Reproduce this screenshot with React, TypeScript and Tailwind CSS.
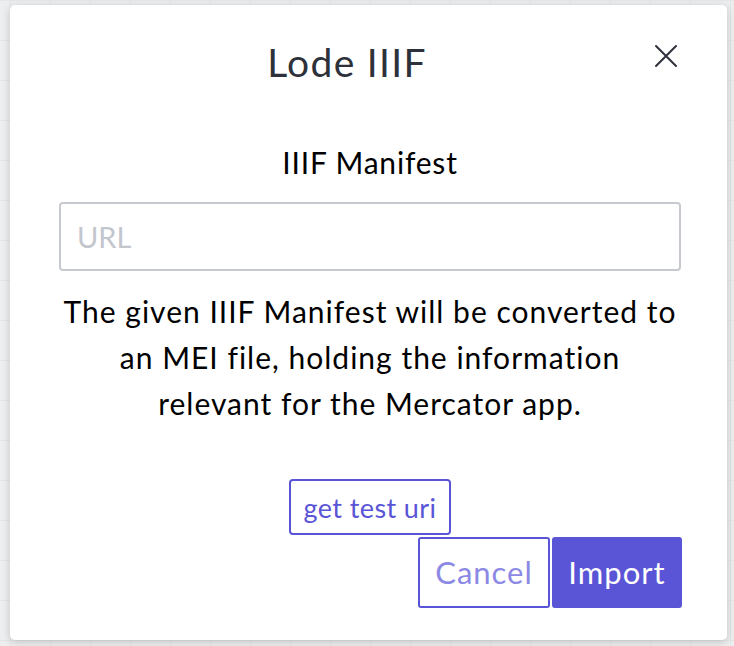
import React from 'react';

const App: React.FC = () => {
  return (
    <div
      className="min-h-screen w-full bg-[#eceeef] bg-[linear-gradient(to_right,#e4e6e8_1px,transparent_1px),linear-gradient(to_bottom,#e4e6e8_1px,transparent_1px)] bg-[size:40px_40px] bg-[position:10px_0] pt-[5px] pl-[10px] pr-[7px]"
      style={{ fontFamily: 'Lato, "Open Sans", sans-serif' }}
    >
      {/* Modal */}
      <div className="w-[717px] h-[635px] bg-white rounded-[5px] shadow-[0_2px_8px_rgba(0,0,0,0.18)] pl-[49px] pr-[46px] pt-[30px]">
        {/* Header */}
        <div className="flex items-center h-[50px]">
          <h1 className="flex-1 text-center text-[39px] leading-none tracking-[1.3px] text-[#2e3139] font-normal mt-[4px]">Lode IIIF</h1>
          <button className="w-[48px] h-[40px] flex items-center justify-end pr-[5px] text-[#2e3139] -mr-[2px] -mt-[8px]">
            <svg width="24" height="24" viewBox="0 0 24 24" fill="none" stroke="currentColor" strokeWidth="2" strokeLinecap="round">
              <path d="M2 2L22 22M22 2L2 22" />
            </svg>
          </button>
        </div>

        {/* Body */}
        <div className="flex flex-col items-center">
          <label className="mt-[62px] text-[30px] leading-none tracking-[0.8px] text-black">IIIF Manifest</label>
          <input
            placeholder="URL"
            className="mt-[25px] w-full h-[69px] border-2 border-[#c6c9d0] rounded-[4px] px-[16px] text-[29px] text-black placeholder:text-[#c3c6cd] outline-none"
          />
          <p className="mt-[17px] text-center text-[30px] leading-[46px] tracking-[1px] text-black">
            The given IIIF Manifest will be converted to
            <br />
            an MEI file, holding the information
            <br />
            relevant for the Mercator app.
          </p>
          <button className="mt-[53px] h-[56px] px-[13px] border-2 border-[#5a55d6] rounded-[4px] text-[#5a55d6] text-[27px] leading-none tracking-[0.4px]">
            get test uri
          </button>
        </div>

        {/* Actions */}
        <div className="flex justify-end gap-[2px] mt-[2px] -mr-[1px]">
          <button className="h-[71px] w-[132px] border-2 border-[#5a55d6] rounded-[3px] bg-white text-[#8c89e4] text-[31px] leading-none tracking-[1px]">
            Cancel
          </button>
          <button className="h-[71px] w-[130px] border-2 border-[#5a55d6] rounded-[3px] bg-[#5a55d6] text-white text-[31px] leading-none tracking-[1px]">
            Import
          </button>
        </div>
      </div>
    </div>
  );
};

export default App;
